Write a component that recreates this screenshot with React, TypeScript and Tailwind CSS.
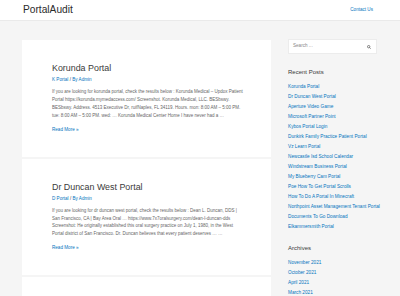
import React from "react";

const posts = [
  {
    title: "Korunda Portal",
    cat: "K Portal",
    body:
      "If you are looking for korunda portal, check the results below : Korunda Medical – Updox Patient Portal https://korunda.mymedaccess.com/ Screenshot. Korunda Medical, LLC. BESbswy. BESbswy. Address. 4513 Executive Dr, ruifNaples, FL 34119. Hours. mon: 8:00 AM – 5:00 PM. tue: 8:00 AM – 5:00 PM. wed: … Korunda Medical Center Home I have never had a …",
  },
  {
    title: "Dr Duncan West Portal",
    cat: "D Portal",
    body:
      "If you are looking for dr duncan west portal, check the results below : Dean L. Duncan, DDS | San Francisco, CA | Bay Area Oral … https://www.7x7oralsurgery.com/dean-l-duncan-dds Screenshot: He originally established this oral surgery practice on July 1, 1980, in the West Portal district of San Francisco. Dr. Duncan believes that every patient deserves … …",
  },
];

const recent = [
  "Korunda Portal",
  "Dr Duncan West Portal",
  "Aperture Video Game",
  "Microsoft Partner Point",
  "Kybos Portal Login",
  "Dunkirk Family Practice Patient Portal",
  "Vz Learn Portal",
  "Newcastle Isd School Calendar",
  "Windstream Business Portal",
  "My Blueberry Cam Portal",
  "Poe How To Get Portal Scrolls",
  "How To Do A Portal In Minecraft",
  "Northpoint Asset Management Tenant Portal",
  "Documents To Go Download",
  "Elkammersmith Portal",
];

const archives = ["November 2021", "October 2021", "April 2021", "March 2021"];

export default function App() {
  return (
    <div
      className="w-[400px] h-[296px] overflow-hidden bg-[#f5f5f5] text-[#3a3a3a]"
      style={{ fontFamily: '"Liberation Sans", Arial, sans-serif' }}
    >
      <header className="h-[21px] bg-white border-b border-[#eaeaea] flex items-center justify-between pl-[23px] pr-[27px]">
        <div className="text-[10.2px] leading-none text-[#2b2b2b]">PortalAudit</div>
        <div className="text-[4.6px] leading-none text-[#0274be]">Contact Us</div>
      </header>
      <div className="flex pl-[22px] pt-[19px] gap-[17px]">
        <main className="w-[249px] flex flex-col gap-[2px] shrink-0">
          {posts.map((p) => (
            <article key={p.title} className="bg-white pl-[30px] pr-[28px] pt-[23px] pb-[24px]">
              <h2 className="text-[8.9px] leading-[10px] text-[#3a3a3a]">{p.title}</h2>
              <div className="mt-[4px] text-[4.6px] leading-[6px] text-[#0274be]">
                {p.cat} <span className="text-[#3a3a3a]">/</span> By Admin
              </div>
              <p className="mt-[5px] text-[4.5px] leading-[7.9px] text-[#666]">{p.body}</p>
              <div className="mt-[7px] text-[4.6px] leading-[6px] text-[#0274be]">Read More »</div>
            </article>
          ))}
          <div className="bg-white h-[40px]" />
        </main>
        <aside className="w-[89px] shrink-0 -mt-[1px]">
          <div className="h-[15px] bg-white border border-[#ececec] flex items-center justify-between pl-[4px] pr-[5px]">
            <span className="text-[4.6px] leading-none text-[#888]">Search ...</span>
            <svg width="4" height="4" viewBox="0 0 10 10" fill="none" stroke="#444" strokeWidth="1.6">
              <circle cx="4.2" cy="4.2" r="3" />
              <path d="M6.5 6.5 L9.2 9.2" />
            </svg>
          </div>
          <h3 className="mt-[13.7px] text-[6px] leading-[8px] text-[#3a3a3a]">Recent Posts</h3>
          <ul className="mt-[6px]">
            {recent.map((r) => (
              <li key={r} className="text-[4.7px] leading-[10px] text-[#0274be] whitespace-nowrap">
                {r}
              </li>
            ))}
          </ul>
          <h3 className="mt-[12.6px] text-[6px] leading-[8px] text-[#3a3a3a]">Archives</h3>
          <ul className="mt-[6px]">
            {archives.map((r) => (
              <li key={r} className="text-[4.7px] leading-[10px] text-[#0274be] whitespace-nowrap">
                {r}
              </li>
            ))}
          </ul>
        </aside>
      </div>
    </div>
  );
}
